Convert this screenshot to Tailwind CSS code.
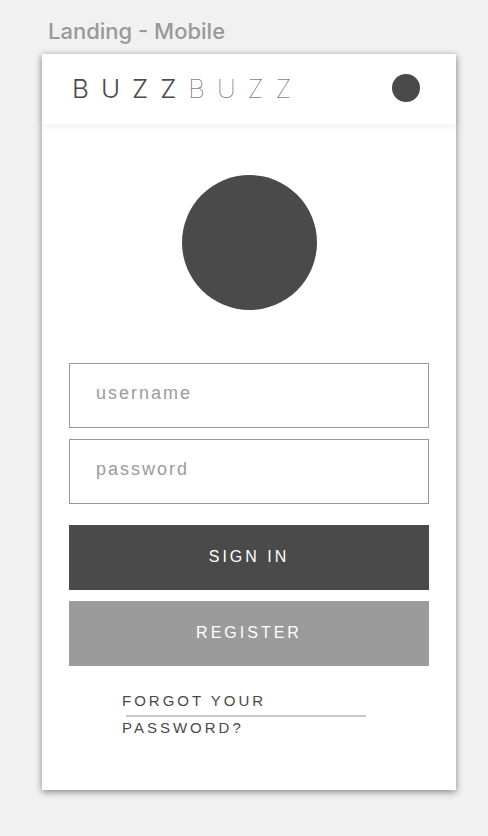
<!DOCTYPE html>
<html lang="en">
<head>
<meta charset="utf-8">
<meta name="viewport" content="width=device-width, initial-scale=1">
<title>Landing - Mobile</title>
<script src="https://cdn.jsdelivr.net/npm/@tailwindcss/browser@4"></script>
</head>
<body class="min-h-screen bg-[#f1f1f1] pt-4 pr-8 pb-11 pl-[42px] font-['Liberation_Sans',Arial,sans-serif] text-[#4a4a4a]">
  <h1 class="mb-2 pl-1.5 font-['Inter',sans-serif] text-[22px] leading-[30px] font-medium text-[#999999]">Landing - Mobile</h1>
  <main class="bg-white pb-[49px] shadow-[0_2px_7px_rgba(0,0,0,0.45)]">
    <header class="flex h-[70px] items-center justify-between pr-9 pb-0.5 pl-[30px] shadow-[0_2px_8px_rgba(0,0,0,0.07)]">
      <div class="flex pt-0.5 font-['Inter',sans-serif] text-[26px] leading-8 tracking-[12px]"><span class="font-light">BUZZ</span><span class="font-thin">BUZZ</span></div>
      <button type="button" aria-label="Menu" class="size-7 rounded-full bg-[#4a4a4a]"></button>
    </header>
    <div class="mx-auto mt-[51px] size-[135px] rounded-full bg-[#4a4a4a]"></div>
    <form class="mt-[53px] flex flex-col gap-[11px] px-[27px]">
      <input type="text" aria-label="Username" placeholder="username" class="h-[65px] w-full border border-[#979797] px-[26px] pb-1 text-lg tracking-[2px] outline-none placeholder:text-[#9b9b9b]">
      <input type="password" aria-label="Password" placeholder="password" class="h-[65px] w-full border border-[#979797] px-[26px] pb-1 text-lg tracking-[2px] outline-none placeholder:text-[#9b9b9b]">
      <button type="submit" class="mt-2.5 h-[65px] w-full bg-[#4a4a4a] pb-0.5 text-base tracking-[3px] text-white">SIGN IN</button>
      <button type="button" class="h-[65px] w-full bg-[#9b9b9b] pb-0.5 text-base tracking-[3px] text-white">REGISTER</button>
    </form>
    <a href="#" class="relative mx-20 mt-[21px] block text-[15px] leading-[27px] tracking-[3px]">FORGOT YOUR<br>PASSWORD?<span class="absolute top-7 right-2.5 left-1 h-0.5 bg-[#c8c8c8]"></span></a>
  </main>
</body>
</html>
